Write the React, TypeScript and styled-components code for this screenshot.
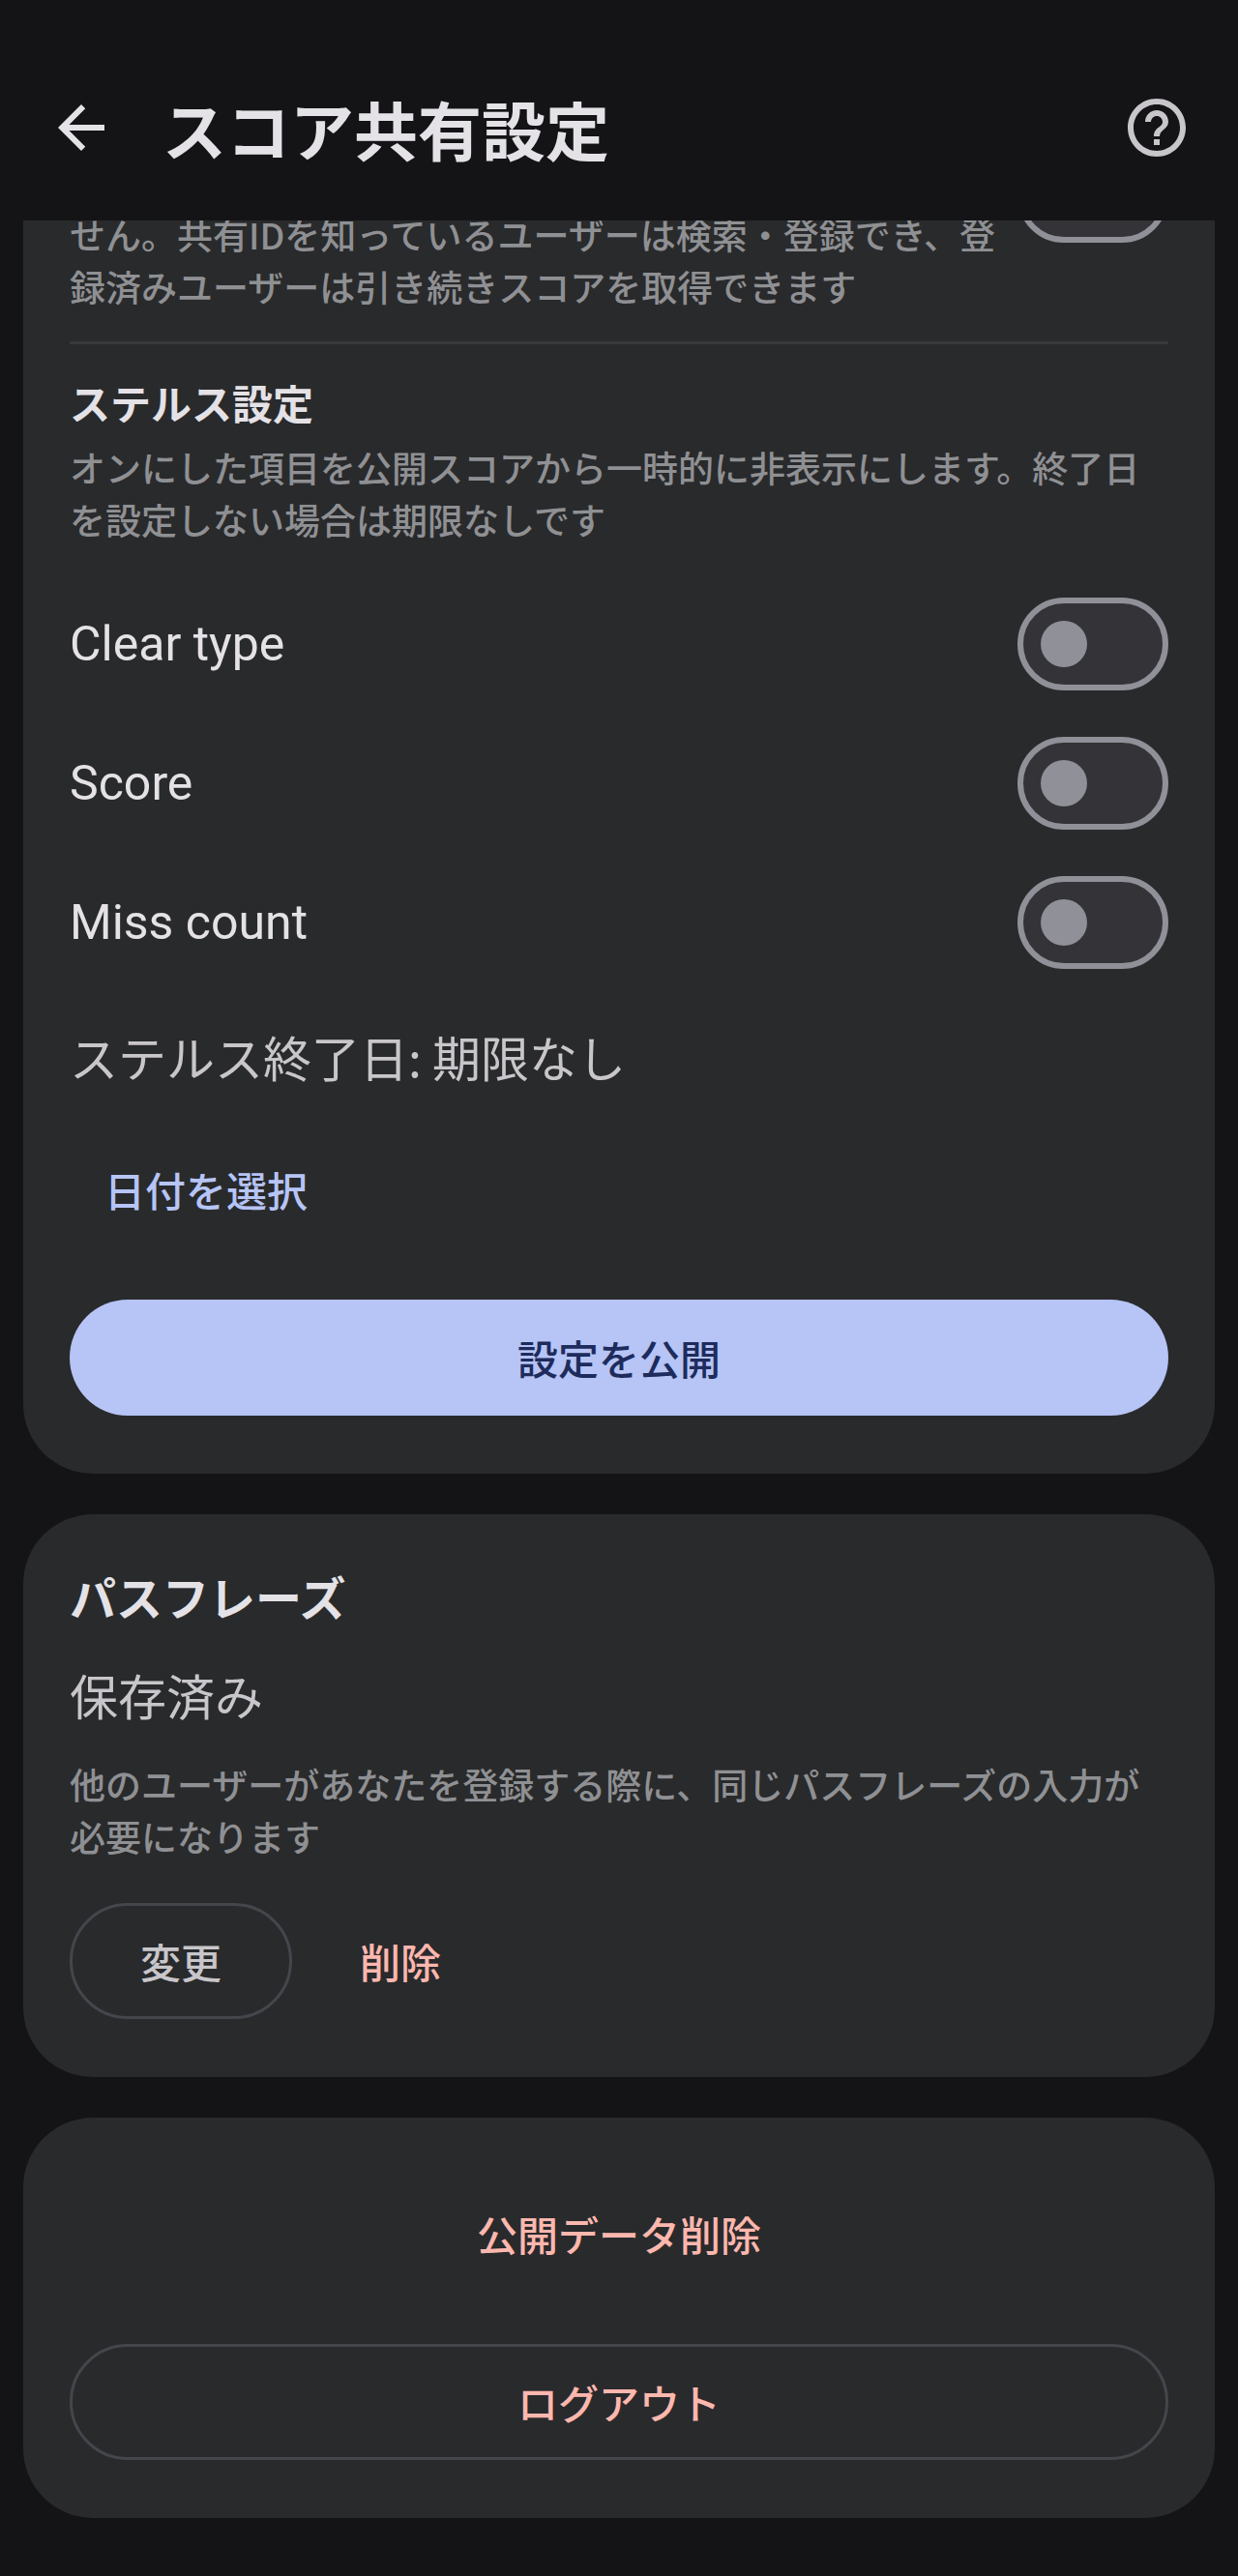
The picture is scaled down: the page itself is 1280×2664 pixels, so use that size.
import { useState } from "react";
import styled, { createGlobalStyle } from "styled-components";

const color = {
  page: "#141416",
  card: "#292a2c",
  heading: "#e4e2e6",
  body: "#c8c6ca",
  muted: "#8f9093",
  outline: "#45464c",
  divider: "#38393b",
  primary: "#b6c4f6",
  onPrimary: "#1d2c5c",
  danger: "#fcb7ae",
  switchLine: "#909098",
  switchTrack: "#343338",
};

const GlobalStyle = createGlobalStyle`
  * { box-sizing: border-box; }
  body {
    margin: 0;
    background: ${color.page};
    color: ${color.body};
    font-family: "Noto Sans CJK JP", Roboto, sans-serif;
  }
  h1, h2, h3, p { margin: 0; }
`;

const Header = styled.header`
  display: flex;
  align-items: center;
  gap: 48px;
  padding: 90px 48px 54px;
`;

const Title = styled.h1`
  flex: 1;
  color: ${color.heading};
  font-size: 66px;
  font-weight: 700;
  line-height: 84px;
`;

const IconButton = styled.button<{ $tone: string }>`
  display: flex;
  padding: 0;
  border: 0;
  background: none;
  color: ${(p) => p.$tone};
  cursor: pointer;

  svg {
    width: 72px;
    height: 72px;
    fill: currentColor;
  }
`;

const ScrollArea = styled.main`
  display: flex;
  flex-direction: column;
  gap: 42px;
  padding: 0 24px 60px;
  overflow: hidden;
`;

const Card = styled.section<{ $scrolled?: boolean }>`
  display: flex;
  flex-direction: column;
  gap: 30px;
  margin-top: ${(p) => (p.$scrolled ? "-121px" : "0")};
  padding: 48px;
  border-radius: 72px;
  background: ${color.card};
`;

const Divider = styled.hr`
  width: 100%;
  height: 3px;
  margin: 0;
  border: 0;
  background: ${color.divider};
`;

const CardTitle = styled.h2`
  color: ${color.heading};
  font-size: 48px;
  font-weight: 700;
  line-height: 72px;
`;

const SectionTitle = styled.h3`
  color: ${color.heading};
  font-size: 42px;
  font-weight: 700;
  line-height: 60px;
`;

const SectionIntro = styled.div`
  display: flex;
  flex-direction: column;
  gap: 10px;
`;

const Note = styled.p`
  color: ${color.muted};
  font-size: 37px;
  font-weight: 500;
  line-height: 54px;
`;

const BodyText = styled.p`
  font-size: 50px;
  line-height: 72px;
`;

const VisibilityRow = styled.div`
  display: flex;
  gap: 12px;
`;

const VisibilityLabel = styled.label`
  flex: 1;
  padding-top: 60px;
`;

const SwitchList = styled.div`
  display: flex;
  flex-direction: column;
`;

const SwitchRow = styled.label`
  display: flex;
  align-items: center;
  justify-content: space-between;
  padding: 24px 0;
  color: ${color.heading};
  font-family: Roboto, "Noto Sans CJK JP", sans-serif;
  font-size: 50px;
  line-height: 72px;
  cursor: pointer;
`;

const Switch = styled.input`
  display: flex;
  align-items: center;
  flex: none;
  width: 156px;
  height: 96px;
  margin: 0;
  padding: 0 18px;
  appearance: none;
  border: 6px solid ${color.switchLine};
  border-radius: 48px;
  background: ${color.switchTrack};
  cursor: pointer;

  &::before {
    content: "";
    width: 48px;
    height: 48px;
    border-radius: 50%;
    background: ${color.switchLine};
  }

  &:checked {
    justify-content: flex-end;
    border-color: ${color.primary};
    background: ${color.primary};
  }

  &:checked::before {
    background: ${color.onPrimary};
  }
`;

const BaseButton = styled.button`
  height: 120px;
  margin: 12px 0;
  border: 0;
  border-radius: 60px;
  background: none;
  font-family: inherit;
  font-size: 42px;
  font-weight: 500;
  line-height: 60px;
  cursor: pointer;
`;

const FilledButton = styled(BaseButton)`
  background: ${color.primary};
  color: ${color.onPrimary};
`;

const TextButton = styled(BaseButton)<{ $danger?: boolean }>`
  padding: 0 36px;
  color: ${(p) => (p.$danger ? color.danger : color.primary)};
`;

const OutlinedButton = styled(BaseButton)<{ $danger?: boolean }>`
  padding: 0 70px;
  border: 3px solid ${color.outline};
  color: ${(p) => (p.$danger ? color.danger : color.body)};
`;

const Actions = styled.div`
  display: flex;
  gap: 34px;
`;

const stealthItems = ["Clear type", "Score", "Miss count"];

export default function App() {
  const [listed, setListed] = useState(false);
  const [hidden, setHidden] = useState<Record<string, boolean>>({});

  return (
    <>
      <GlobalStyle />
      <Header>
        <IconButton type="button" $tone={color.heading}>
          <svg viewBox="0 0 24 24" aria-hidden="true">
            <path d="M20 11H7.83l5.59-5.59L12 4l-8 8 8 8 1.41-1.41L7.83 13H20v-2z" />
          </svg>
        </IconButton>
        <Title>スコア共有設定</Title>
        <IconButton type="button" $tone={color.body}>
          <svg viewBox="0 0 24 24" aria-hidden="true">
            <path d="M11 18h2v-2h-2v2zm1-16C6.48 2 2 6.48 2 12s4.48 10 10 10 10-4.48 10-10S17.52 2 12 2zm0 18c-4.41 0-8-3.59-8-8s3.59-8 8-8 8 3.59 8 8-3.59 8-8 8zm0-14c-2.21 0-4 1.79-4 4h2c0-1.1.9-2 2-2s2 .9 2 2c0 2-3 1.75-3 5h2c0-2.25 3-2.5 3-5 0-2.21-1.79-4-4-4z" />
          </svg>
        </IconButton>
      </Header>

      <ScrollArea>
        <Card $scrolled>
          <VisibilityRow>
            <VisibilityLabel htmlFor="listed">
              <Note as="span">
                せん。共有IDを知っているユーザーは検索・登録でき、登録済みユーザーは引き続きスコアを取得できます
              </Note>
            </VisibilityLabel>
            <Switch
              id="listed"
              type="checkbox"
              role="switch"
              checked={listed}
              onChange={(e) => setListed(e.target.checked)}
            />
          </VisibilityRow>
          <Divider />
          <SectionIntro>
            <SectionTitle>ステルス設定</SectionTitle>
            <Note>
              オンにした項目を公開スコアから一時的に非表示にします。終了日を設定しない場合は期限なしです
            </Note>
          </SectionIntro>
          <SwitchList>
            {stealthItems.map((item) => (
              <SwitchRow key={item}>
                {item}
                <Switch
                  type="checkbox"
                  role="switch"
                  checked={!!hidden[item]}
                  onChange={(e) => setHidden({ ...hidden, [item]: e.target.checked })}
                />
              </SwitchRow>
            ))}
          </SwitchList>
          <BodyText>ステルス終了日: 期限なし</BodyText>
          <Actions>
            <TextButton type="button">日付を選択</TextButton>
          </Actions>
          <FilledButton type="button">設定を公開</FilledButton>
        </Card>

        <Card>
          <CardTitle>パスフレーズ</CardTitle>
          <BodyText>保存済み</BodyText>
          <Note>
            他のユーザーがあなたを登録する際に、同じパスフレーズの入力が必要になります
          </Note>
          <Actions>
            <OutlinedButton type="button">変更</OutlinedButton>
            <TextButton type="button" $danger>
              削除
            </TextButton>
          </Actions>
        </Card>

        <Card>
          <TextButton type="button" $danger>
            公開データ削除
          </TextButton>
          <OutlinedButton type="button" $danger>
            ログアウト
          </OutlinedButton>
        </Card>
      </ScrollArea>
    </>
  );
}
